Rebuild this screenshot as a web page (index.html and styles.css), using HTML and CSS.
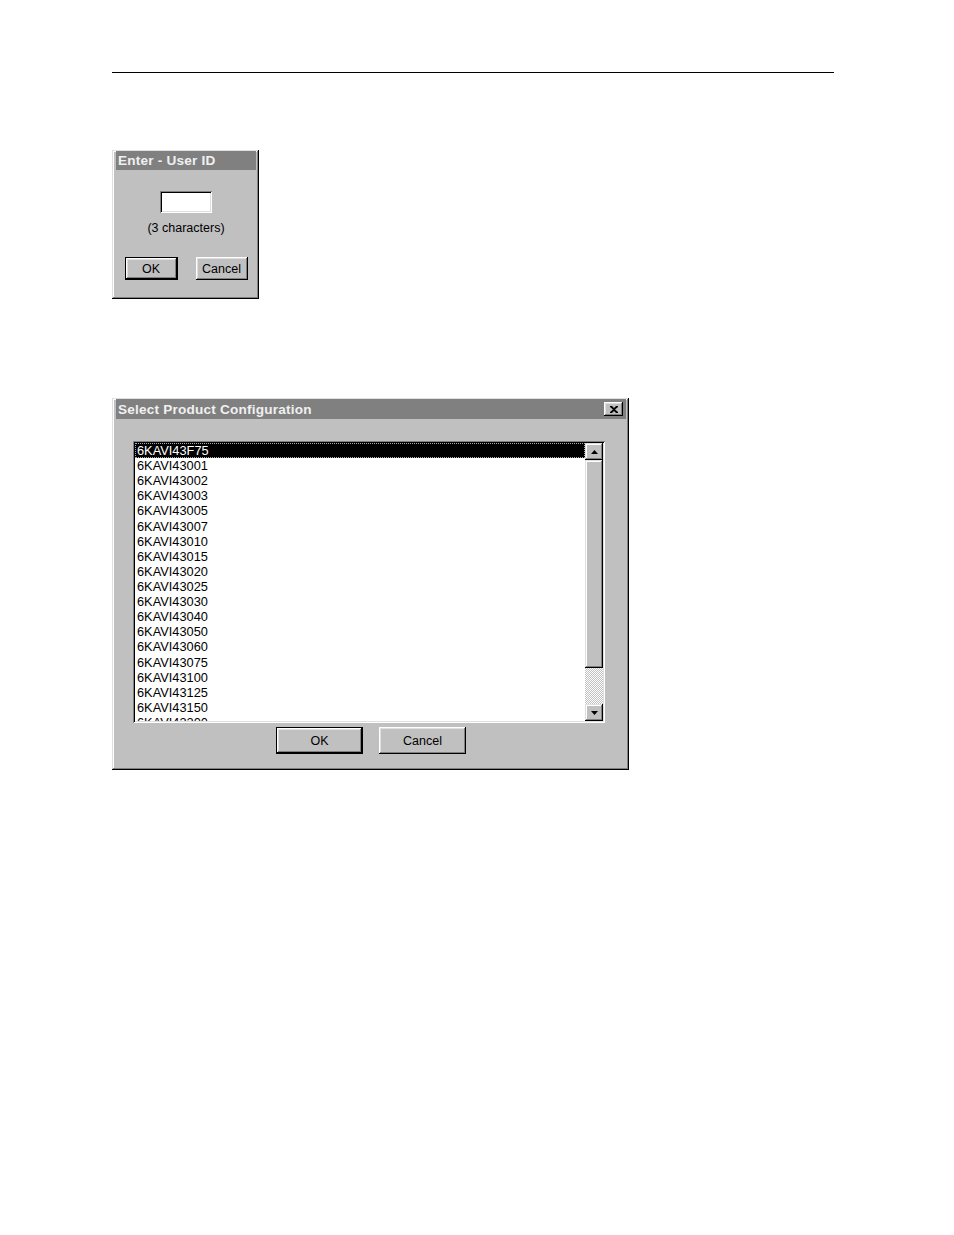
FILE: index.html
```html
<!DOCTYPE html>
<html>
<head>
<meta charset="utf-8">
<title>Dialogs</title>
<link rel="stylesheet" href="styles.css">
</head>
<body>
<div class="page">
  <div class="rule"></div>

  <div class="win dlg1">
    <div class="title"><span>Enter - User ID</span></div>
    <div class="body1">
      <div class="field"></div>
      <div class="hint">(3 characters)</div>
      <div class="btns1">
        <div class="btn default b1">OK</div>
        <div class="btn b1c">Cancel</div>
      </div>
    </div>
  </div>

  <div class="win dlg2">
    <div class="title">
      <span>Select Product Configuration</span>
      <span class="close"><svg width="8" height="7" viewBox="0 0 8 7"><path d="M0 0h2l2 2 2-2h2v1L5 3.5 8 6v1H6L4 5 2 7H0V6l3-2.5L0 1z" fill="#000"/></svg></span>
    </div>
    <div class="body2">
      <div class="listbox">
        <div class="items">
          <div class="item sel">6KAVI43F75</div>
          <div class="item">6KAVI43001</div>
          <div class="item">6KAVI43002</div>
          <div class="item">6KAVI43003</div>
          <div class="item">6KAVI43005</div>
          <div class="item">6KAVI43007</div>
          <div class="item">6KAVI43010</div>
          <div class="item">6KAVI43015</div>
          <div class="item">6KAVI43020</div>
          <div class="item">6KAVI43025</div>
          <div class="item">6KAVI43030</div>
          <div class="item">6KAVI43040</div>
          <div class="item">6KAVI43050</div>
          <div class="item">6KAVI43060</div>
          <div class="item">6KAVI43075</div>
          <div class="item">6KAVI43100</div>
          <div class="item">6KAVI43125</div>
          <div class="item">6KAVI43150</div>
          <div class="item">6KAVI43200</div>
        </div>
        <div class="scroll">
          <div class="sbtn arrow"><svg width="7" height="4" viewBox="0 0 7 4"><path d="M3.5 0L7 4H0z" fill="#000"/></svg></div>
          <div class="sbtn thumb"></div>
          <div class="track"></div>
          <div class="sbtn arrow"><svg width="7" height="4" viewBox="0 0 7 4"><path d="M0 0h7L3.5 4z" fill="#000"/></svg></div>
        </div>
      </div>
      <div class="btns2">
        <div class="btn default b2">OK</div>
        <div class="btn b2">Cancel</div>
      </div>
    </div>
  </div>
</div>
</body>
</html>
```

FILE: styles.css
```css
body {
  margin: 0;
  background: #fff;
  font-family: "Liberation Sans", Arial, sans-serif;
  color: #000;
}

.page {
  padding: 72px 0 0 112px;
}

.rule {
  width: 722px;
  border-top: 1px solid #000;
}

.win {
  box-sizing: border-box;
  background: #c0c0c0;
  box-shadow: inset -1px -1px #000, inset 1px 1px #dfdfdf, inset -2px -2px #808080, inset 2px 2px #fff;
  padding: 1px 3px 3px 4px;
}

.title {
  display: flex;
  justify-content: space-between;
  align-items: center;
  background: #808080;
  color: #f0f0f0;
  font-weight: bold;
  font-size: 13.6px;
  letter-spacing: 0.2px;
  padding-left: 2px;
}

.dlg1 {
  margin-top: 77px;
  width: 147px;
  height: 149px;
}

.dlg1 .title {
  height: 19px;
}

.body1 {
  display: flex;
  flex-direction: column;
  align-items: center;
  padding-top: 21px;
}

.field {
  width: 52px;
  height: 22px;
  background: #fff;
  box-shadow: inset 1px 1px #808080, inset -1px -1px #fff, inset 2px 2px #000, inset -2px -2px #dfdfdf;
}

.hint {
  margin-top: 8px;
  font-size: 12.5px;
  line-height: 15px;
}

.btns1 {
  display: flex;
  gap: 18px;
  margin-top: 21px;
}

.btn {
  box-sizing: border-box;
  display: flex;
  align-items: center;
  justify-content: center;
  font-size: 12.5px;
  background: #c0c0c0;
  box-shadow: inset -1px -1px #000, inset 1px 1px #fff, inset -2px -2px #808080, inset 2px 2px #dfdfdf;
}

.btn.default {
  box-shadow: inset 0 0 0 1px #000, inset -2px -2px #000, inset 2px 2px #fff, inset -3px -3px #808080, inset 3px 3px #dfdfdf;
}

.b1 {
  width: 53px;
  height: 23px;
}

.b1c {
  width: 52px;
  height: 23px;
}

.dlg2 {
  margin-top: 99px;
  width: 517px;
  height: 372px;
}

.dlg2 .title {
  height: 20px;
}

.close {
  box-sizing: border-box;
  width: 19px;
  height: 14px;
  margin-right: 3px;
  display: flex;
  align-items: center;
  justify-content: center;
  background: #c0c0c0;
  box-shadow: inset -1px -1px #000, inset 1px 1px #fff, inset -2px -2px #808080, inset 2px 2px #dfdfdf;
}

.body2 {
  padding: 22px 0 0 17px;
}

.listbox {
  box-sizing: border-box;
  width: 472px;
  height: 282px;
  padding: 2px;
  display: flex;
  background: #fff;
  box-shadow: inset 1px 1px #808080, inset -1px -1px #fff, inset 2px 2px #000, inset -2px -2px #dfdfdf;
}

.items {
  flex: 1;
  overflow: hidden;
}

.item {
  height: 15.12px;
  line-height: 15px;
  padding-left: 2px;
  font-size: 12.8px;
  white-space: nowrap;
}

.item.sel {
  background: #000;
  color: #fff;
  outline: 1px dotted #aaa;
  outline-offset: -1px;
}

.scroll {
  width: 18px;
  display: flex;
  flex-direction: column;
}

.sbtn {
  box-sizing: border-box;
  background: #c0c0c0;
  box-shadow: inset -1px -1px #000, inset 1px 1px #dfdfdf, inset -2px -2px #808080, inset 2px 2px #fff;
}

.arrow {
  height: 17px;
  display: flex;
  align-items: center;
  justify-content: center;
}

.thumb {
  height: 208px;
}

.track {
  flex: 1;
  background-image: repeating-conic-gradient(#fff 0 25%, #c0c0c0 0 50%);
  background-size: 2px 2px;
}

.btns2 {
  display: flex;
  justify-content: center;
  gap: 16px;
  margin-top: 4px;
  margin-left: -17px;
}

.b2 {
  width: 87px;
  height: 27px;
}
```
